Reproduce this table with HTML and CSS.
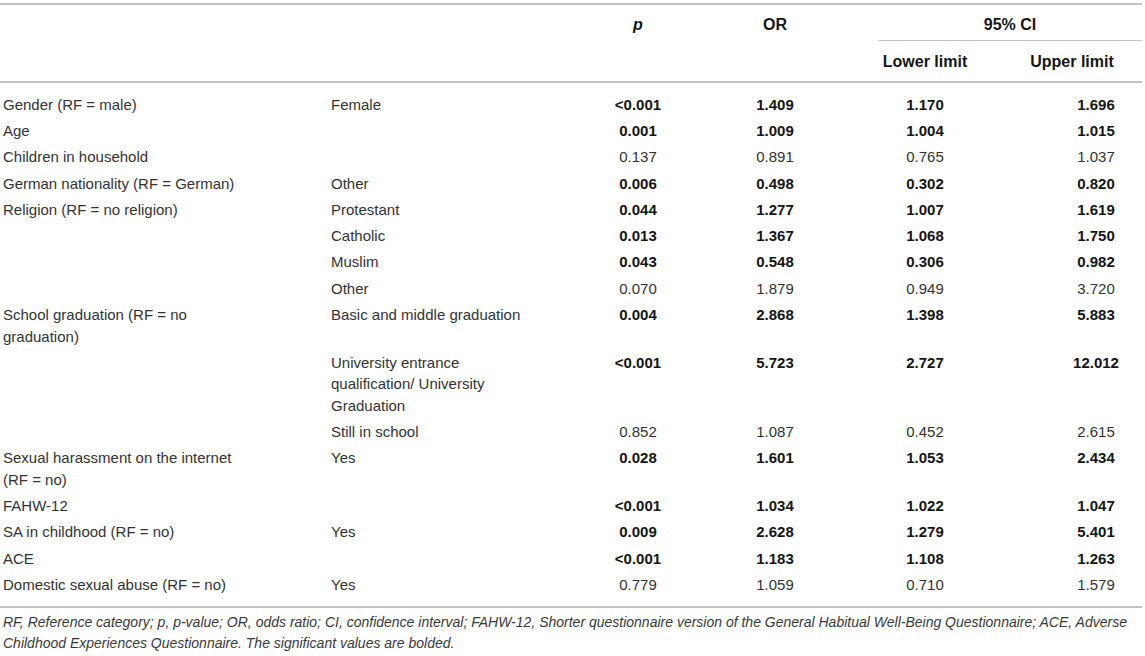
FILE: index.html
```html
<!DOCTYPE html>
<html lang="en">
<head>
  <meta charset="UTF-8" />
  <title>Logistic regression</title>
  <link rel="stylesheet" href="styles.css">
</head>
<body>
  <div class="table-wrap">
    <table class="results">
      <colgroup>
        <col class="c-var" />
        <col class="c-cat" />
        <col class="c-p" />
        <col class="c-or" />
        <col class="c-low" />
        <col class="c-up" />
      </colgroup>
      <thead>
        <tr>
          <th rowspan="2"></th>
          <th rowspan="2"></th>
          <th rowspan="2" class="num top"><i>p</i></th>
          <th rowspan="2" class="num top">OR</th>
          <th colspan="2" class="ci"><div class="ci-label">95% CI</div></th>
        </tr>
        <tr>
          <th class="num sub">Lower limit</th>
          <th class="num sub up">Upper limit</th>
        </tr>
      </thead>
      <tbody>
        <tr class="first">
          <td>Gender (RF = male)</td><td>Female</td>
          <td class="num b">&lt;0.001</td><td class="num b">1.409</td><td class="num b">1.170</td><td class="num b up">1.696</td>
        </tr>
        <tr>
          <td>Age</td><td></td>
          <td class="num b">0.001</td><td class="num b">1.009</td><td class="num b">1.004</td><td class="num b up">1.015</td>
        </tr>
        <tr>
          <td>Children in household</td><td></td>
          <td class="num">0.137</td><td class="num">0.891</td><td class="num">0.765</td><td class="num up">1.037</td>
        </tr>
        <tr>
          <td>German nationality (RF = German)</td><td>Other</td>
          <td class="num b">0.006</td><td class="num b">0.498</td><td class="num b">0.302</td><td class="num b up">0.820</td>
        </tr>
        <tr>
          <td>Religion (RF = no religion)</td><td>Protestant</td>
          <td class="num b">0.044</td><td class="num b">1.277</td><td class="num b">1.007</td><td class="num b up">1.619</td>
        </tr>
        <tr>
          <td></td><td>Catholic</td>
          <td class="num b">0.013</td><td class="num b">1.367</td><td class="num b">1.068</td><td class="num b up">1.750</td>
        </tr>
        <tr>
          <td></td><td>Muslim</td>
          <td class="num b">0.043</td><td class="num b">0.548</td><td class="num b">0.306</td><td class="num b up">0.982</td>
        </tr>
        <tr>
          <td></td><td>Other</td>
          <td class="num">0.070</td><td class="num">1.879</td><td class="num">0.949</td><td class="num up">3.720</td>
        </tr>
        <tr>
          <td>School graduation (RF = no graduation)</td><td>Basic and middle graduation</td>
          <td class="num b">0.004</td><td class="num b">2.868</td><td class="num b">1.398</td><td class="num b up">5.883</td>
        </tr>
        <tr>
          <td></td><td>University entrance qualification/ University Graduation</td>
          <td class="num b">&lt;0.001</td><td class="num b">5.723</td><td class="num b">2.727</td><td class="num b up">12.012</td>
        </tr>
        <tr>
          <td></td><td>Still in school</td>
          <td class="num">0.852</td><td class="num">1.087</td><td class="num">0.452</td><td class="num up">2.615</td>
        </tr>
        <tr>
          <td>Sexual harassment on the internet (RF = no)</td><td>Yes</td>
          <td class="num b">0.028</td><td class="num b">1.601</td><td class="num b">1.053</td><td class="num b up">2.434</td>
        </tr>
        <tr>
          <td>FAHW-12</td><td></td>
          <td class="num b">&lt;0.001</td><td class="num b">1.034</td><td class="num b">1.022</td><td class="num b up">1.047</td>
        </tr>
        <tr>
          <td>SA in childhood (RF = no)</td><td>Yes</td>
          <td class="num b">0.009</td><td class="num b">2.628</td><td class="num b">1.279</td><td class="num b up">5.401</td>
        </tr>
        <tr>
          <td>ACE</td><td></td>
          <td class="num b">&lt;0.001</td><td class="num b">1.183</td><td class="num b">1.108</td><td class="num b up">1.263</td>
        </tr>
        <tr class="last">
          <td>Domestic sexual abuse (RF = no)</td><td>Yes</td>
          <td class="num">0.779</td><td class="num">1.059</td><td class="num">0.710</td><td class="num up">1.579</td>
        </tr>
      </tbody>
    </table>
    <p class="note">RF, Reference category; p, p-value; OR, odds ratio; CI, confidence interval; FAHW-12, Shorter questionnaire version of the General Habitual Well-Being Questionnaire; ACE, Adverse Childhood Experiences Questionnaire. The significant values are bolded.</p>
  </div>
</body>
</html>
```

FILE: styles.css
```css
:root {
  --rule: #c4c4c4;
  --text: #333;
  --strong: #151515;
}

body {
  margin: 0;
  padding-top: 3px;
  background: #fff;
  color: var(--text);
  font-family: 'Liberation Sans', Arial, sans-serif;
  font-size: 15px;
}

.table-wrap {
  width: 1142px;
}

.results {
  width: 1142px;
  table-layout: fixed;
  border-collapse: collapse;
  line-height: 21.5px;
}

.c-var { width: 328px; }
.c-cat { width: 246px; }
.c-p { width: 128px; }
.c-or { width: 146px; }
.c-low { width: 154px; }
.c-up { width: 140px; }

thead {
  border-top: 2px solid var(--rule);
  border-bottom: 2px solid var(--rule);
}

th {
  font-size: 16px;
  font-weight: bold;
  color: var(--strong);
  padding: 0;
}

th.top {
  vertical-align: top;
  padding-top: 9px;
}

th.ci {
  padding: 9px 0 0 30px;
}

.ci-label {
  padding-bottom: 4.5px;
  border-bottom: 1px solid var(--rule);
}

th.sub {
  padding: 10px 0 8px 0;
}

td {
  vertical-align: top;
  padding: 2.4px 3px;
}

td:first-child {
  padding-right: 76px;
}

td:nth-child(2) {
  padding-right: 28px;
}

.num {
  text-align: center;
}

td.num {
  padding-left: 0;
  padding-right: 0;
}

.up,
td.up {
  padding-left: 48px;
}

td.b {
  font-weight: bold;
  color: var(--strong);
}

tr.first td {
  padding-top: 11.25px;
}

tr.last td {
  padding-bottom: 10.25px;
}

tbody {
  border-bottom: 2px solid var(--rule);
}

.note {
  margin: 4px 0 0 0;
  padding-left: 3px;
  font-style: italic;
  font-size: 14px;
  line-height: 21px;
  color: #3a3a3a;
}
```
